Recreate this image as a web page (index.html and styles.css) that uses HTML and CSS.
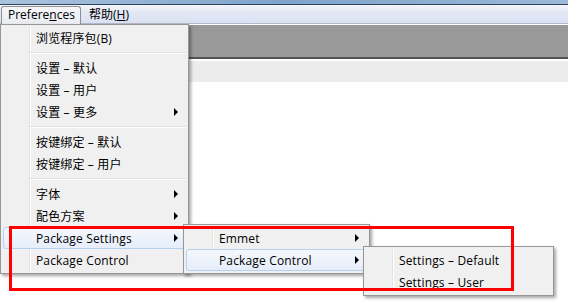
FILE: index.html
```html
<!DOCTYPE html>
<html>
  <head>
    <link rel="stylesheet" href="styles.css">
  </head>
<body>
<!--The window behind the menus-->
<div class="window">
  <div class="titlebar"></div>
  <div class="menubar">
    <span class="menu-title open">Prefere<u>n</u>ces</span>
    <span class="menu-title">帮助(<u>H</u>)</span>
  </div>
  <div class="toolbar"></div>
  <div class="tabbar"></div>
  <div class="editor"></div>
</div>

<!--Preferences menu-->
<div class="menu main-menu">
  <div class="item">浏览程序包(B)</div>
  <div class="sep"></div>
  <div class="item">设置 – 默认</div>
  <div class="item">设置 – 用户</div>
  <div class="item">设置 – 更多<span class="arrow"></span></div>
  <div class="sep"></div>
  <div class="item">按键绑定 – 默认</div>
  <div class="item">按键绑定 – 用户</div>
  <div class="sep"></div>
  <div class="item">字体<span class="arrow"></span></div>
  <div class="item">配色方案<span class="arrow"></span></div>
  <div class="item active">Package Settings<span class="arrow"></span></div>
  <div class="item">Package Control</div>
</div>

<!--Package Settings submenu-->
<div class="menu sub-one">
  <div class="item">Emmet<span class="arrow"></span></div>
  <div class="item active">Package Control<span class="arrow"></span></div>
</div>

<!--Package Control submenu-->
<div class="menu sub-two">
  <div class="item">Settings – Default</div>
  <div class="item">Settings – User</div>
</div>

<!--red marking box drawn over the menus-->
<div class="callout"></div>
</body>
</html>
```

FILE: styles.css
```css
body{
  margin: 0;
  background-color: #ffffff;
  font-family: "Open Sans", "Noto Sans CJK SC", sans-serif;
  font-size: 12px;
  color: #000000;
  overflow: hidden;
}
.window{
  width: 568px;
  height: 306px;
  display: flex;
  flex-direction: column;
}
.titlebar{
  height: 4px;
  background: linear-gradient(90deg, #a9c3de, #7fa4cb 50%, #9bb9d8);
  border-bottom: 1px solid #2f4259;
}
.menubar{
  height: 18px;
  display: flex;
  align-items: center;
  gap: 1px;
  padding-left: 1px;
  background: linear-gradient(#f4f6fb, #e3e8f5 40%, #d9e1f2);
  border-bottom: 1px solid #b3b9c6;
}
.menu-title{
  height: 17px;
  line-height: 16px;
  padding: 0 6px 0 6px;
  border: 1px solid transparent;
  border-bottom: none;
  margin-top: 1px;
}
.menu-title.open{
  width: 66px;
  border-color: #8e8f91;
  border-radius: 3px 3px 0 0;
  background: linear-gradient(#f6f7f9, #e9ebef);
}
.toolbar{
  height: 32px;
  border-top: 1px solid #ffffff;
  background-color: #999999;
  border-bottom: 2px solid #545454;
}
.tabbar{
  margin-top: 2px;
  height: 21px;
  background-color: #ececec;
}
.editor{
  flex: 1;
  background-color: #ffffff;
}

/* popup menus */
.menu{
  position: absolute;
  box-sizing: border-box;
  padding: 2px;
  background-color: #f0f0f0;
  border: 1px solid #979797;
  box-shadow: 2px 2px 3px rgba(0,0,0,0.35);
}
.menu::before{
  content: "";
  position: absolute;
  top: 2px;
  bottom: 2px;
  left: 28px;
  width: 1px;
  background-color: #e2e3e3;
  border-right: 1px solid #ffffff;
}
.main-menu{
  left: 0;
  top: 24px;
  width: 189px;
}
.sub-one{
  left: 183px;
  top: 224px;
  width: 187px;
}
.sub-two{
  left: 363px;
  top: 246px;
  width: 191px;
}
.item{
  position: relative;
  box-sizing: border-box;
  height: 22px;
  display: flex;
  align-items: center;
  padding-left: 32px;
  border: 1px solid transparent;
  border-radius: 3px;
  white-space: nowrap;
  letter-spacing: 0.15px;
}
.item.active{
  border-color: #b6d2f1;
  background: linear-gradient(#f4f7fc, #e6eefa);
}
.arrow{
  margin-left: auto;
  margin-right: 7px;
  width: 0;
  height: 0;
  border-left: 4px solid #000000;
  border-top: 4px solid transparent;
  border-bottom: 4px solid transparent;
}
.sep{
  position: relative;
  height: 8px;
}
.sep::after{
  content: "";
  position: absolute;
  left: 27px;
  right: 0;
  top: 3px;
  height: 1px;
  background-color: #e0e0e0;
  border-bottom: 1px solid #ffffff;
}
.callout{
  position: absolute;
  left: 9px;
  top: 226px;
  width: 499px;
  height: 59px;
  border: 3px solid #ff0000;
}
```
